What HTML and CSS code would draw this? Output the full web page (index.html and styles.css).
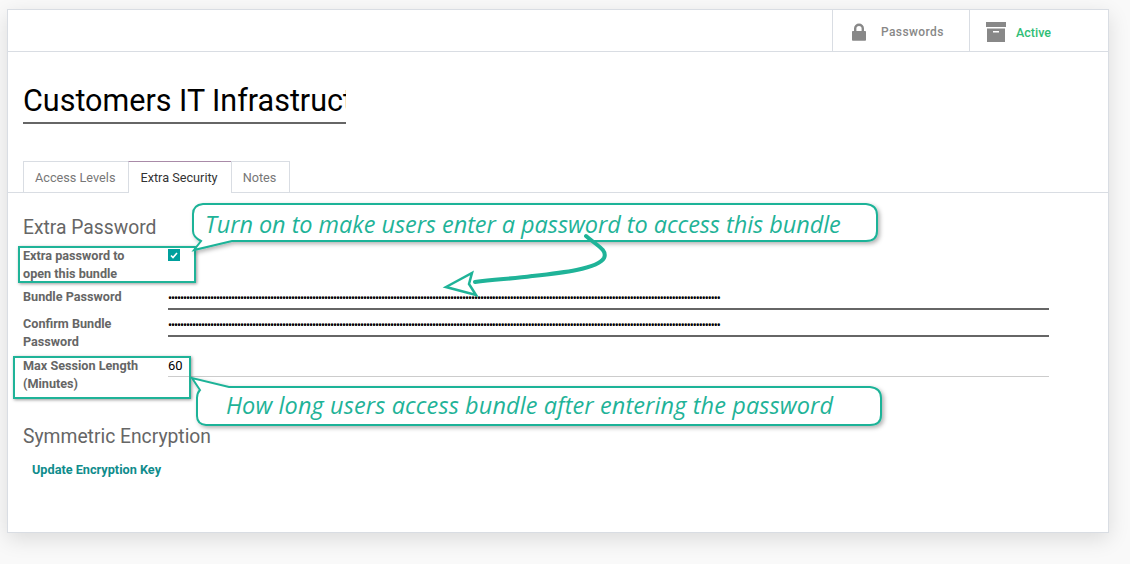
FILE: index.html
```html
<!DOCTYPE html>
<html>
<head>
	<meta charset="utf-8">
	<title>Customers IT Infrastructure</title>
	<link rel="stylesheet" href="styles.css">
</head>
<body>
<div class="page">

	<div class="sheet">
		<div class="topbar">
			<div class="statbtn statpass">
				<svg class="icon" width="16" height="18" viewBox="0 0 16 18"><path fill="#888888" d="M3 8V5.500a5 5 0 0 1 10 0V8h1.200c.5 0 .8.3.8.8v8.200c0 .5-.3.8-.8.8H1.800c-.5 0-.8-.3-.8-.8V8.800c0-.5.3-.8.8-.8zM5.400 8h5.200V5.500a2.600 2.600 0 0 0-5.200 0z"/></svg>
				<span class="statlabel">Passwords</span>
			</div>
			<div class="statbtn statactive">
				<svg class="icon" width="20" height="20" viewBox="0 0 20 20"><path fill="#888888" d="M0 0h20v5H0zM1 6.500h18V20H1zM7 9v1.500h6V9z" fill-rule="evenodd"/></svg>
				<span class="activelabel">Active</span>
			</div>
		</div>

		<div class="titlebox"><div class="title">Customers IT Infrastructure</div></div>

		<div class="tabs">
			<div class="tab">Access Levels</div>
			<div class="tab tabon">Extra Security</div>
			<div class="tab">Notes</div>
		</div>

		<div class="content">
			<h2 class="sect">Extra Password</h2>
			<div class="form">
				<div class="lbl">Extra password to<br>open this bundle</div>
				<div><span class="check"><svg width="8" height="7" viewBox="0 0 8 7"><path fill="none" stroke="#ffffff" stroke-width="1.600" d="M1 3.500l2 2 4-4.500"/></svg></span></div>

				<div class="lbl">Bundle Password</div>
				<div><input class="pass" type="password" readonly value="xxxxxxxxxx xxxxxxxxxx xxxxxxxxxx xxxxxxxxxx xxxxxxxxxx xxxxxxxxxx xxxxxxxxxx xxxxxxxxxx xxxxxxxxxx xxxxxxxxxx xxxxxxxxxx xxxxxxxxxx xxxxxxxxxx xxxxxxxxxx xxxxxxxxxx xxxxxxxxxx xxxxxxxx"></div>

				<div class="lbl">Confirm Bundle<br>Password</div>
				<div><input class="pass" type="password" readonly value="xxxxxxxxxx xxxxxxxxxx xxxxxxxxxx xxxxxxxxxx xxxxxxxxxx xxxxxxxxxx xxxxxxxxxx xxxxxxxxxx xxxxxxxxxx xxxxxxxxxx xxxxxxxxxx xxxxxxxxxx xxxxxxxxxx xxxxxxxxxx xxxxxxxxxx xxxxxxxxxx xxxxxxxx"></div>

				<div class="lbl">Max Session Length<br>(Minutes)</div>
				<div><div class="num">60</div></div>
			</div>

			<h2 class="sect sect2">Symmetric Encryption</h2>
			<div class="link">Update Encryption Key</div>
		</div>
	</div>

	<!-- annotations on top of the form -->
	<div class="hilite hilite1"></div>
	<div class="hilite hilite2"></div>

	<svg class="marks" width="1130" height="564" viewBox="0 0 1130 564">
		<defs>
			<filter id="soft" x="-5%" y="-20%" width="110%" height="150%">
				<feDropShadow dx="2" dy="2" stdDeviation="2" flood-color="#000000" flood-opacity="0.3"/>
			</filter>
		</defs>
		<path class="bubble" filter="url(#soft)" d="M203 204H866Q877 205 877 215V231Q877 241 866 241H232L194 250L201 241Q193 237 193 231V214Q193 205 203 204Z"/>
		<path class="bubble" filter="url(#soft)" d="M229 387H870Q881 388 881 398V415Q881 425 870 425H206Q197 424 197 416V398Q197 393 200 390L192 378Z"/>
		<path class="arrowline" d="M586 236C596 245 608 250 604 258C598 269 560 273 532 276C512 279 495 279 475 282"/>
		<path class="arrowhead" d="M446 287L472 273L469 284L476 295Z"/>
	</svg>

	<div class="note note1">Turn on to make users enter a password to access this bundle</div>
	<div class="note note2">How long users access bundle after entering the password</div>

</div>
</body>
</html>
```

FILE: styles.css
```css
html,body {
	margin: 0;
	padding: 0;
	background: #f9f9f9;
}
.page {
	position: relative;
	width: 1130px;
	height: 564px;
	overflow: hidden;
	padding-top: 9px;
	box-sizing: border-box;
	font-family: Roboto,"Liberation Sans",sans-serif;
	font-size: 12px;
	color: #666666;
}
.sheet {
	width: 1102px;
	height: 524px;
	margin-left: 7px;
	box-sizing: border-box;
	background: #ffffff;
	border: 1px solid #d9dde3;
	box-shadow: 0 6px 20px rgba(0,0,0,0.12);
}

/* top buttons */
.topbar {
	display: flex;
	justify-content: flex-end;
	height: 41px;
	border-bottom: 1px solid #d9dde3;
}
.statbtn {
	display: flex;
	align-items: center;
	padding-top: 2px;
	border-left: 1px solid #d9dde3;
}
.statpass {
	width: 137px;
	padding-left: 18px;
	box-sizing: border-box;
}
.statactive {
	width: 139px;
	padding-left: 16px;
	box-sizing: border-box;
}
.statlabel {
	margin-left: 14px;
	color: #888888;
	font-weight: 500;
	letter-spacing: 0.4px;
}
.activelabel {
	margin-left: 10px;
	margin-top: 1px;
	color: #2fbd76;
	font-weight: 500;
	font-size: 12.500px;
}

/* title */
.titlebox {
	width: 323px;
	height: 72px;
	margin-left: 15px;
	box-sizing: border-box;
	border-bottom: 2px solid #666666;
	overflow: hidden;
}
.title {
	margin-top: 31px;
	font-size: 30.500px;
	line-height: 36px;
	color: #000000;
	white-space: nowrap;
}

/* tabs */
.tabs {
	display: flex;
	margin-top: 37px;
	padding-left: 15px;
	border-bottom: 1px solid #d9dde3;
	height: 31px;
}
.tab {
	padding: 0 13px 0 11px;
	line-height: 31px;
	height: 30px;
	border: 1px solid #d9dde3;
	border-bottom: 0;
	margin-right: -1px;
	color: #777777;
	font-size: 12.700px;
}
.tabon {
	height: 31px;
	background: #ffffff;
	color: #333333;
	border-top-color: #a98ba8;
}

/* form */
.content {
	padding: 23px 0 0 15px;
}
.sect {
	margin: 0;
	font-size: 19.300px;
	font-weight: 400;
	line-height: 24px;
	color: #666666;
}
.sect2 {
	margin-top: 33px;
}
.form {
	display: grid;
	grid-template-columns: 145px 881px;
	grid-template-rows: 41px 27px 42px 36px;
	margin-top: 6px;
}
.lbl {
	padding-top: 1px;
	font-size: 12.650px;
	font-weight: 700;
	line-height: 18px;
	color: #666666;
}
.check {
	display: flex;
	align-items: center;
	justify-content: center;
	width: 12px;
	height: 12px;
	margin-top: 3px;
	background: #00a09d;
}
.pass {
	display: block;
	width: 100%;
	height: 23px;
	box-sizing: border-box;
	padding: 0;
	border: 0;
	border-bottom: 2px solid #666666;
	outline: none;
	font-family: Roboto,sans-serif;
	font-size: 12px;
	letter-spacing: -1.050px;
	color: #000000;
	background: none;
}
.num {
	height: 21px;
	box-sizing: border-box;
	border-bottom: 1px solid #cccccc;
	line-height: 20px;
	font-size: 13px;
	color: #000000;
}
.link {
	margin: 13px 0 0 9px;
	font-size: 12.700px;
	font-weight: 700;
	color: #0f8c8c;
}

/* annotations */
.hilite {
	position: absolute;
	box-sizing: border-box;
	border: 2px solid #1fb398;
	box-shadow: 1px 1px 3px rgba(0,0,0,0.4);
}
.hilite1 {
	left: 18px;
	top: 246px;
	width: 178px;
	height: 37px;
}
.hilite2 {
	left: 13px;
	top: 356px;
	width: 178px;
	height: 43px;
}
.marks {
	position: absolute;
	left: 0;
	top: 0;
}
.bubble {
	fill: #ffffff;
	stroke: #1fb398;
	stroke-width: 2;
}
.arrowline {
	fill: none;
	stroke: #1fb398;
	stroke-width: 4;
	stroke-linecap: round;
}
.arrowhead {
	fill: #ffffff;
	stroke: #1fb398;
	stroke-width: 2.500;
}
.note {
	position: absolute;
	font-family: "Open Sans",sans-serif;
	font-style: italic;
	font-size: 23.500px;
	line-height: 30px;
	color: #1fb398;
	white-space: nowrap;
}
.note1 {
	left: 205px;
	top: 209px;
	letter-spacing: -0.05px;
}
.note2 {
	left: 226px;
	top: 390px;
	letter-spacing: 0.11px;
}
```
